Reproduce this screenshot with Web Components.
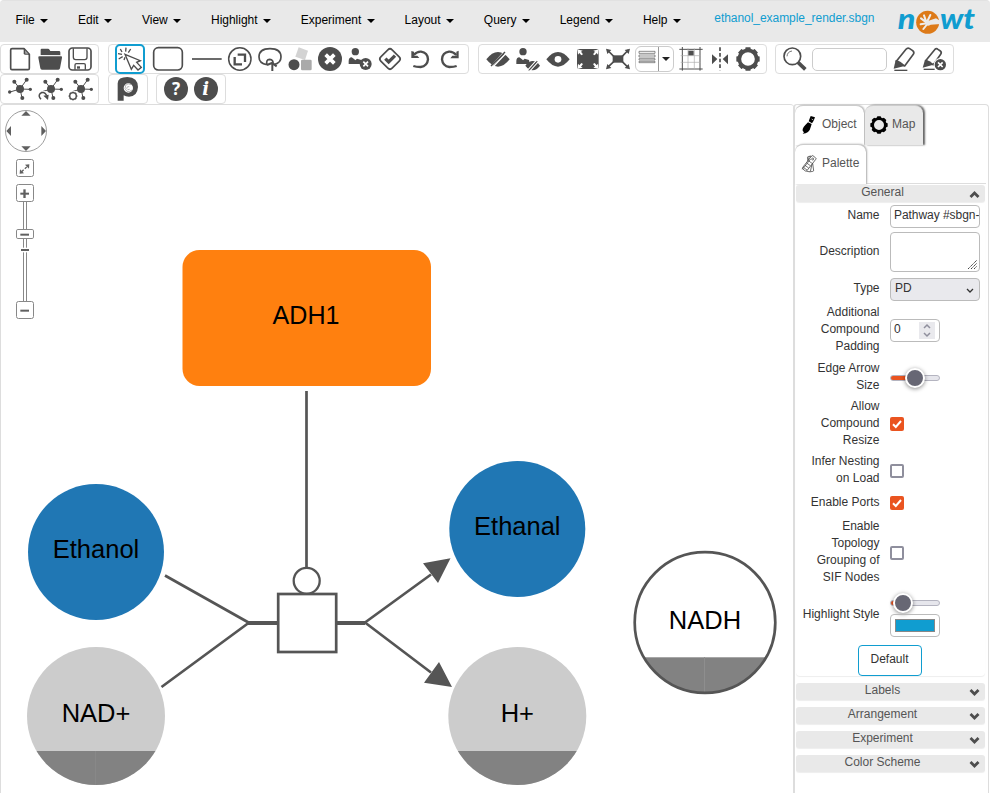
<!DOCTYPE html>
<html lang="en">
<head>
<meta charset="utf-8">
<title>Newt</title>
<style>
html,body{margin:0;height:100%;overflow:hidden;background:#fff}
body{font:12px/17px "Liberation Sans",Arial,sans-serif;color:#333}
</style>
</head>
<body>
<newt-app></newt-app>
<script>
const define = (name, html, init) => {
  const tpl = document.createElement('template');
  tpl.innerHTML = html;
  customElements.define(name, class extends HTMLElement {
    constructor() {
      super();
      this.attachShadow({ mode: 'open' }).append(tpl.content.cloneNode(true));
    }
    connectedCallback() { if (init) init.call(this, this.shadowRoot); }
  });
};

/* Each icon: [viewBox, markup]; three units per CSS pixel. */
const person = (x, y) => `<circle cx="${x}" cy="${y}" r="11"/><path d="M${x-20} ${y+37}v-9q0-10 9-11l8 6 3 3 5-5 13 4q2 4 1 12z"/>`;
const gearTeeth = (n, cx, cy, r, w, h) => Array.from({ length: n }, (_, i) =>
  `<rect x="${cx-w/2}" y="${cy-r-h}" width="${w}" height="${h+3}" rx="2" transform="rotate(${i*360/n} ${cx} ${cy})"/>`).join('');
const network = cx => `<g transform="translate(${cx} 267)"><circle r="12"/><g stroke="#4d4d4d" stroke-width="3"><path d="M0 0L-17-22M0 0L20-28M0 0L31 1M0 0L6 26M0 0L-30 9"/></g><circle cx="-17" cy="-22" r="6"/><circle cx="20" cy="-28" r="6"/><circle cx="31" cy="1" r="5"/><circle cx="7" cy="27" r="6"/>`;
const eye = '<path fill-rule="evenodd" d="M-35 0Q-18-22 0-22T35 0Q18 22 0 22T-35 0z"/>';
const ICONS = {
  file: ['15 132 90 90', '<path fill="none" stroke="#4d4d4d" stroke-width="5" stroke-linejoin="round" d="M36 146H72L88 163V205Q88 209 84 209H36Q32 209 32 205V150Q32 146 36 146z"/><path d="M71 145L89 164H75Q71 164 71 160z" fill="#4d4d4d"/><path d="M75 151l10 10H76z" fill="#aaa"/>'],
  folder: ['105 132 90 90', '<path d="M122 166V149q0-3 3-3h19q3 0 5 4l2 3h26q4 0 4 4v10z"/><path d="M120 167H182" stroke="#fff" stroke-width="3"/><path d="M115 173q-1-4 4-4h64q4 0 3 4l-6 32q-1 4-5 4h-49q-4 0-5-4z"/>'],
  save: ['195 132 90 90', '<g fill="none" stroke="#4d4d4d" stroke-width="5"><rect x="207" y="144" width="66" height="66" rx="10"/><path d="M220 145v27q0 7 7 7h27q7 0 7-7v-27" stroke-width="4"/><path d="M225 209v-14q0-4 4-4h23q4 0 4 4v14" stroke-width="4"/></g><rect x="231" y="199" width="9" height="7"/>'],
  pointer: ['345 132 90 90', '<g fill="none" stroke="#4d4d4d"><path d="M375 163L421 182L410 187L424 202L414 210L401 196L394 208Z" stroke-width="4"/><g stroke-width="4"><path d="M377 155L378 143M385 158L392 147M366 156L361 147M366 163L354 161M368 170L356 177M375 172L372 180"/></g></g>'],
  node: ['435 132 138 90', '<rect x="461" y="143" width="86" height="67" rx="14" fill="none" stroke="#4d4d4d" stroke-width="5"/>'],
  edge: ['574 132 102 90', '<path d="M577 177H666" stroke="#4d4d4d" stroke-width="5"/>'],
  expand: ['675 132 90 90', '<circle cx="719.500" cy="177" r="33.500" fill="none" stroke="#4d4d4d" stroke-width="4.500"/><path d="M713 164H735V186M704 171V193H726" fill="none" stroke="#4d4d4d" stroke-width="7"/>'],
  lasso: ['765 132 90 90', '<g fill="none" stroke="#4d4d4d" stroke-width="5"><path d="M801 194Q777 190 777 171Q777 146 810 146Q843 146 843 171Q843 189 822 194"/><path d="M801 194Q797 179 809 178Q821 179 819 192"/><path d="M801 195L816 189L830 199M817 192V213" stroke-width="6"/></g>'],
  shapes: ['855 132 90 90', '<path d="M896 142L924 152L915 180L886 170Z" fill="#d3d3d3"/><rect x="903" y="179" width="32" height="32" rx="4" fill="#aaa"/><circle cx="882" cy="194" r="16.500"/>'],
  remove: ['945 132 90 90', '<circle cx="990" cy="177" r="36"/><path d="M977 164L1003 190M1003 164L977 190" stroke="#fff" stroke-width="11"/>'],
  userx: ['45 132 90 90', person(76, 155) + '<circle cx="107" cy="192" r="18"/><path d="M100 185L114 199M114 185L100 199" stroke="#fff" stroke-width="5"/>'],
  check: ['135 132 90 90', '<rect x="156" y="153" width="48" height="48" rx="9" transform="rotate(45 180 177)" fill="none" stroke="#4d4d4d" stroke-width="5"/><path d="M166 176L176 186L195 167" fill="none" stroke="#4d4d4d" stroke-width="10"/>'],
  undo: ['225 132 90 90', '<path d="M251 165Q262 154 273 155Q293 158 294 178Q292 198 272 201Q258 201 250 198" fill="none" stroke="#4d4d4d" stroke-width="7"/><path d="M244 153v21h24l-6-7h-10v-12z"/>'],
  redo: ['315 132 90 90', '<path d="M379 165Q368 154 357 155Q337 158 336 178Q338 198 358 201Q372 201 380 198" fill="none" stroke="#4d4d4d" stroke-width="7"/><path d="M386 152v23h-25l6-8h12v-12z"/>'],
  hide: ['459 132 90 90', `<g transform="translate(504 178)">${eye}<path d="M-22 23L17-21M-16 24L24-18" stroke="#fff" stroke-width="4"/><path d="M-21 20L21-22" stroke="#4d4d4d" stroke-width="4"/></g>`],
  userhide: ['549 132 90 90', person(579, 155) + `<g transform="translate(608 197) scale(.63)">${eye}<path d="M-24 22L17-24M-14 26L26-18" stroke="#fff" stroke-width="6"/><path d="M-19 23L22-22" stroke="#4d4d4d" stroke-width="5"/></g>`],
  eye: ['639 132 90 90', `<g transform="translate(684 178)">${eye}<circle r="10" fill="#fff"/></g>`],
  fit: ['729 132 90 90', '<path d="M743 150h60v55h-60z"/><rect x="741" y="147" width="65" height="60" rx="5"/><g fill="#fff"><path d="M742 148l16 4-5 3 6 8-5 3-6-7-4 5zM806 148l-16 4 5 3-6 8 5 3 6-7 4 5zM742 207l16-4-5-3 6-8-5-3-6 7-4-5zM806 207l-16-4 5-3-6-8 5-3 6 7 4-5z"/></g>'],
  spread: ['819 132 90 90', '<rect x="848" y="166" width="32" height="22"/><path d="M832 150L852 170M895 150L876 170M832 203L852 184M895 203L876 184" stroke="#4d4d4d" stroke-width="5"/><path d="M828 146l16 4-12 12zM900 146l-16 4 12 12zM828 208l16-4-12-12zM900 208l-16-4 12-12z"/>'],
  align: ['915 138 72 78', '<g fill="none" stroke="#555" stroke-width="2"><path d="M927 154h48v6h-48zM927 165h48v6h-48zM927 176h48v4h-48zM927 184h48v4h-48z"/></g>'],
  grid: ['48 132 90 90', '<g fill="none" stroke="#4d4d4d"><path d="M58 148H128M58 207H128M67 141V212M120 141V212" stroke-width="3"/><path d="M62 167H123M62 187H123M84 145V210M103 145V210" stroke-width="2" stroke="#aaa"/></g><rect x="85" y="152" width="16" height="14"/>'],
  mirror: ['138 132 84 90', '<path d="M156 163V193L172 177zM204 163V193L188 177z"/><path d="M180 142V211" stroke="#4d4d4d" stroke-width="5" stroke-dasharray="11 6"/>'],
  gear: ['219 132 90 90', '<circle cx="264" cy="177" r="26" fill="none" stroke="#4d4d4d" stroke-width="11"/>' + gearTeeth(8, 264, 177, 29, 16, 6)],
  search: ['360 132 90 90', '<circle cx="397" cy="169" r="25" fill="none" stroke="#4d4d4d" stroke-width="5"/><path d="M381 169q1-14 15-16" fill="none" stroke="#777" stroke-width="3"/><path d="M414 187L436 208" stroke="#4d4d4d" stroke-width="11"/>'],
  pencil: ['687 132 90 90', '<path d="M709 184L738 148Q743 142 749 146L758 152Q764 157 760 163L734 198Z" fill="none" stroke="#4d4d4d" stroke-width="5" stroke-linejoin="round"/><path d="M707 180Q724 183 734 198L701 206z"/><path d="M703 211H742" stroke="#4d4d4d" stroke-width="4"/>'],
  pencilx: ['777 132 90 90', '<path d="M797 182L824 149Q829 144 834 148L841 153Q846 157 842 163L820 194Z" fill="none" stroke="#4d4d4d" stroke-width="5" stroke-linejoin="round"/><path d="M795 179Q810 181 820 194L788 203z"/><path d="M791 208H824" stroke="#4d4d4d" stroke-width="4"/><circle cx="841" cy="194" r="20" fill="#fff"/><circle cx="841" cy="194" r="17"/><path d="M834 187L848 201M848 187L834 201" stroke="#fff" stroke-width="5"/>'],
  net: ['15 222 90 90', network(60) + '<circle cx="-31" cy="9" r="5"/></g>'],
  netredo: ['105 222 90 90', network(153) + '</g><circle cx="130" cy="288" r="15" fill="#fff"/><path d="M123 298Q114 288 120 281Q131 272 140 286" fill="none" stroke="#4d4d4d" stroke-width="4.500"/><path d="M130 287l16-3-2 16z"/>'],
  netgear: ['195 222 90 90', network(243) + '</g><circle cx="219" cy="288" r="16" fill="#fff"/><circle cx="219" cy="288" r="10" fill="none" stroke="#4d4d4d" stroke-width="4"/>' + gearTeeth(8, 219, 288, 11, 5, 2.5)],
  pathway: ['339 222 90 90', '<path fill-rule="evenodd" d="M353 302V250Q354 231 382 231Q414 233 414 261Q412 290 387 290Q377 290 371 286V302zM371 264A14 14 0 1 0 399 264A14 14 0 1 0 371 264z"/><path d="M393 254Q384 248 377 256Q371 267 381 274Q389 277 396 270M388 260q-7-2-8 5 3 6 9 3" fill="none" stroke="#aaa" stroke-width="2.500"/>'],
  help: ['483 222 90 90', '<circle cx="528" cy="267" r="36"/><text x="528" y="285" text-anchor="middle" font-size="51" font-weight="700" fill="#fff" font-family="Noto Sans,sans-serif">?</text>'],
  info: ['573 222 90 90', '<circle cx="618" cy="267" r="36"/><text x="617" y="286" text-anchor="middle" font-size="54" font-style="italic" font-weight="700" fill="#fff" font-family="DejaVu Serif,serif">i</text>'],
  brush: ['33 42 60 66', '<g fill="#000"><path d="M65 48L78 52L74 62L69 70L59 64z"/><path d="M68 57l5 3" stroke="#fff" stroke-width="2"/><path d="M57 67l11 5-3 10q-4 19-24 19l4-4q-8-5-1-16 6-7 13-14z"/></g>'],
  tabgear: ['240 42 60 66', '<g fill="#000"><circle cx="270" cy="75" r="19" fill="none" stroke="#000" stroke-width="8"/>' + gearTeeth(8, 270, 75, 21, 12, 5) + '</g>'],
  swatch: ['33 158 60 66', '<g fill="#fff" stroke="#333" stroke-width="2"><rect x="58" y="168" width="13" height="46" rx="3" transform="rotate(-8 64 190)"/><rect x="56" y="168" width="13" height="46" rx="3" transform="rotate(12 62 190)"/><rect x="52" y="164" width="16" height="50" rx="3" transform="rotate(38 60 190)"/><path d="M43 201l11 8M48 195l11 8M53 188l11 8M58 181l11 8M40 207l25-31"/></g><circle cx="71" cy="176" r="3" fill="none" stroke="#333" stroke-width="2"/>']
};

define('newt-icon', `<style>:host{display:block;flex:none}svg{display:block;fill:#4d4d4d}</style><svg></svg>`, function (r) {
  const [box, body] = ICONS[this.getAttribute('name')], s = r.querySelector('svg'), b = box.split(' ');
  s.setAttribute('viewBox', box);
  s.setAttribute('width', b[2] / 3);
  s.setAttribute('height', b[3] / 3);
  s.innerHTML = body;
});

define('newt-menu', `<style>:host{display:flex;align-items:center;padding:0 15px;color:#000}
i{width:0;height:0;border:4px solid transparent;border-top-color:#000;border-bottom:0;margin-left:5.3px;margin-top:1px}</style><slot></slot><i></i>`);

define('newt-logo', `<style>:host{display:block}svg{display:block}</style>
<svg width="90" height="37" viewBox="708 3 270 111"><g fill="#109dd0" font-family="Lato,sans-serif" font-weight="900" font-style="italic" font-size="84"><text x="713" y="87" textLength="53" lengthAdjust="spacingAndGlyphs">n</text><text x="840" y="87" textLength="105" lengthAdjust="spacingAndGlyphs">wt</text></g>
<circle cx="803" cy="67" r="34.500" fill="#dd7a18"/><path d="M800 68L783 55M799 66L792 46M801 66L811 45M800 70L782 73M802 72L790 87" stroke="#eee" stroke-width="6" stroke-linecap="round"/><path d="M795 69Q796 60 806 62L828 55 842 64V72L812 74Q800 82 795 69z" fill="#e9e9e9"/></svg>`);

define('newt-menubar', `<style>:host{display:flex;height:42px;box-sizing:border-box;background:#e9e9e9;border-radius:4px 4px 0 0;border-top:1px solid #e2e2e2;padding-left:.5px;flex:none}
nav{display:flex;height:38px;flex:none;letter-spacing:-.02px}.name{color:#109dd0;margin:9px 0 0 18.500px;width:182px;white-space:nowrap;letter-spacing:-.05px}</style>
<nav><newt-menu>File</newt-menu><newt-menu>Edit</newt-menu><newt-menu>View</newt-menu><newt-menu>Highlight</newt-menu><newt-menu>Experiment</newt-menu><newt-menu>Layout</newt-menu><newt-menu>Query</newt-menu><newt-menu>Legend</newt-menu><newt-menu>Help</newt-menu></nav><span class="name">ethanol_example_render.sbgn</span><newt-logo></newt-logo>`);

define('newt-group', `<style>:host{display:flex;height:30px;box-sizing:border-box;border:1px solid #ddd;border-radius:4px;align-items:center;flex:none}</style><slot></slot>`);

define('newt-toolbar', `<style>:host{display:block;flex:none;padding-top:2px}
.row{display:flex;gap:9px;height:30px}
.a{width:99px;padding-left:4px}.b{width:361px;padding-left:6px}.c{width:289px;padding-left:4px}.d{width:179px;padding-left:4px}
.p{width:40px;padding-left:4px}.h{width:70px;padding-left:4px}
.on{outline:2px solid #109dd0;outline-offset:-2px;border-radius:5px}
.drop{display:flex;box-sizing:border-box;border:1px solid #ccc;border-radius:6px;width:39px;height:26px;margin:0 2px;overflow:hidden;align-items:center}
.drop newt-icon{margin-left:-1px;width:23px;overflow:hidden}
.drop b{flex:1;height:100%;border-left:1px solid #999;display:grid;place-items:center}
.drop i{border:4px solid transparent;border-top-color:#222;border-bottom:0}
.find{width:75px;height:23px;box-sizing:border-box;border:1px solid #ccc;border-radius:5px;margin:0 2px}
</style>
<div class="row"><newt-group class="a"><newt-icon name="file"></newt-icon><newt-icon name="folder"></newt-icon><newt-icon name="save"></newt-icon></newt-group>
<newt-group class="b"><newt-icon class="on" name="pointer"></newt-icon><newt-icon name="node"></newt-icon><newt-icon name="edge"></newt-icon><newt-icon name="expand"></newt-icon><newt-icon name="lasso"></newt-icon><newt-icon name="shapes"></newt-icon><newt-icon name="remove"></newt-icon><newt-icon name="userx"></newt-icon><newt-icon name="check"></newt-icon><newt-icon name="undo"></newt-icon><newt-icon name="redo"></newt-icon></newt-group>
<newt-group class="c"><newt-icon name="hide"></newt-icon><newt-icon name="userhide"></newt-icon><newt-icon name="eye"></newt-icon><newt-icon name="fit"></newt-icon><newt-icon name="spread"></newt-icon><span class="drop"><newt-icon name="align"></newt-icon><b><i></i></b></span><newt-icon name="grid"></newt-icon><newt-icon name="mirror"></newt-icon><newt-icon name="gear" style="margin-left:-1px"></newt-icon></newt-group>
<newt-group class="d" style="margin-left:-1px"><newt-icon name="search"></newt-icon><span class="find"></span><newt-icon name="pencil"></newt-icon><newt-icon name="pencilx"></newt-icon></newt-group></div>
<div class="row"><newt-group class="a"><newt-icon name="net"></newt-icon><newt-icon name="netredo"></newt-icon><newt-icon name="netgear"></newt-icon></newt-group><newt-group class="p"><newt-icon name="pathway"></newt-icon></newt-group><newt-group class="h" style="margin-left:-1px"><newt-icon name="help"></newt-icon><newt-icon name="info"></newt-icon></newt-group></div>`);

define('newt-panzoom', `<style>:host{display:block}svg{display:block}</style>
<svg width="50" height="220" viewBox="0 12 150 660"><g fill="#fff" stroke="#888" stroke-width="3"><circle cx="78" cy="93" r="61.500" stroke-width="2.500"/><rect x="49.500" y="178.500" width="51" height="51" rx="6"/><path d="M70.500 300V606M79.500 300V606"/><rect x="49.500" y="253.500" width="51" height="51" rx="6"/><rect x="49.500" y="388.500" width="51" height="27" rx="4"/><rect x="49.500" y="604.500" width="51" height="51" rx="6"/></g>
<rect x="63" y="443" width="24" height="14" fill="#fff"/>
<g fill="#606060"><path d="M78 33l14 14H64zM78 153l14-14H64zM19 93l14-15v30zM138 93l-14-15v30zM88 193l-1 13-12-12zM59 221l1-13 12 12z"/><path d="M65 215L82 199" stroke="#606060" stroke-width="4" stroke-dasharray="8 5"/><rect x="61" y="278" width="26" height="6"/><rect x="70" y="268" width="7" height="26"/><rect x="61" y="401" width="26" height="6"/><rect x="63" y="447" width="24" height="6"/><rect x="61" y="629" width="26" height="6"/></g></svg>`);

define('newt-canvas', `<style>:host{display:block;position:relative;box-sizing:border-box;width:794px;flex:none;border:1px solid #ddd;border-width:1px 0 0 1px;border-radius:4px 4px 0 0;overflow:hidden}
.map{display:block}newt-panzoom{position:absolute;left:-1px;top:-1px}text{font:25.5px "Liberation Sans",Arial,sans-serif;fill:#000;text-anchor:middle}</style>
<svg class="map" width="793" height="688" viewBox="1 105 793 688">
<defs><clipPath id="n"><circle cx="96" cy="716" r="69"/></clipPath><clipPath id="h"><circle cx="517.300" cy="716" r="69"/></clipPath><clipPath id="d"><circle cx="705" cy="622.500" r="70"/></clipPath></defs>
<rect x="182.500" y="250" width="248.500" height="136" rx="17" fill="#ff800f"/>
<circle cx="96" cy="552" r="68" fill="#2077b4"/><circle cx="517.300" cy="529" r="68" fill="#2077b4"/>
<circle cx="96" cy="716" r="69" fill="#ccc"/><circle cx="517.300" cy="716" r="69" fill="#ccc"/>
<rect x="20" y="751" width="160" height="40" fill="#828282" clip-path="url(#n)"/><path d="M95.500 751V785" stroke="#888"/>
<rect x="440" y="751" width="160" height="40" fill="#828282" clip-path="url(#h)"/>
<rect x="630" y="657.300" width="150" height="40" fill="#828282" clip-path="url(#d)"/><path d="M704.500 657V692" stroke="#8e8e8e"/>
<g fill="none" stroke="#555" stroke-width="2.700"><circle cx="705" cy="622.500" r="70.300"/><path d="M306.500 391V568M165 575.500L248.500 622.500M161.500 687L248.500 623M365 622.500L431 574.500M365 622.500L431 672.500"/><circle cx="306.700" cy="580.800" r="13" stroke-width="2.300"/><rect x="278.200" y="594" width="58" height="58" fill="#fff"/><path d="M248 623H277M337 623H365" stroke-width="3.800"/></g>
<path fill="#555" d="M423 563.300L450.500 558.300L438 583zM439 662L452 687L424 682.700z"/>
<text x="306" y="324" textLength="67" lengthAdjust="spacingAndGlyphs">ADH1</text><text x="96" y="558">Ethanol</text><text x="517.300" y="534.700">Ethanal</text><text x="96" y="722">NAD+</text><text x="517.300" y="722">H+</text><text x="705" y="629">NADH</text>
</svg><newt-panzoom></newt-panzoom>`);

define('newt-tab', `<style>:host{display:flex;box-sizing:border-box;height:40px;align-items:center;border-radius:8px 8px 0 0;color:#555;border-top:1px solid #ccc;box-shadow:1px 0 2px #aaa;background:#fff;gap:2px;padding-left:5px}
:host([active]){background:#e9e9e9;box-shadow:2px 0 2px #666}span{margin-top:-2px}slot[name]{display:block;margin-top:-1px}</style><slot name="icon"></slot><span><slot></slot></span>`);

define('newt-section', `<style>:host{display:block;margin:0 2px 7px 1px}
header{display:flex;height:17px;background:#e9e9e9;border-radius:3px;color:#555;justify-content:center;align-items:center;position:relative;box-shadow:0 1px 1px #eee}
header span{line-height:14px;padding:0 16px 3px 0}svg{position:absolute;right:5px;top:5px}
:host([open]) svg{transform:scaleY(-1)}</style>
<header><span></span><svg width="11" height="9" viewBox="0 0 11 9"><path d="M1.500 2L5.500 6L9.500 2" fill="none" stroke="#4d4d4d" stroke-width="2.800"/></svg></header><slot></slot>`, function (r) {
  r.querySelector('span').textContent = this.getAttribute('label');
});

define('newt-field', `<style>:host{display:grid;grid-template-columns:83.500px 90px;grid-template-rows:100%;column-gap:10.500px;align-items:center}
label{text-align:right;color:#333;padding-bottom:2px;white-space:pre-line}</style><label></label><slot></slot>`, function (r) {
  r.querySelector('label').textContent = this.getAttribute('label').replaceAll('|', '\n');
  this.style.height = this.getAttribute('h') + 'px';
});

define('newt-check', `<style>:host{display:block;width:14px;height:14px;box-sizing:border-box;border:2px solid #8f8f9d;border-radius:2px}svg{display:none}
:host([checked]){border:0;background:#ea5420}:host([checked]) svg{display:block}</style><svg width="14" height="14"><path d="M3 7.200L5.800 10L11 4" fill="none" stroke="#fff" stroke-width="2"/></svg>`);

define('newt-slider', `<style>:host{display:flex;align-items:center;width:50px;height:20px}
div{display:flex;align-items:center;box-sizing:border-box;width:50px;height:6px;border-radius:3px;border:1px solid #b4b4c0;background:linear-gradient(to right,#ea5420 var(--v),#e6e6ec 0)}
i{box-sizing:border-box;width:20px;height:20px;flex:none;border:2px solid #fff;border-radius:50%;background:#676774;margin-left:calc(var(--v) - 11px);box-shadow:0 1px 4px #0007}</style><div><i></i></div>`, function () {
  this.style.setProperty('--v', this.getAttribute('at') + 'px');
});

define('newt-panel', `<style>:host{display:block;box-sizing:border-box;width:196px;margin-left:-1px;flex:none;border:1px solid #ddd;border-left-width:2px;border-right-width:1px;border-bottom:0;border-radius:4px 4px 0 0}
.tabs{display:grid;grid-template-columns:69px 58px;column-gap:1px;grid-template-rows:38.500px 40px;height:78px;border-bottom:1px solid #ddd;margin-right:2px}
.map{padding-left:4px;gap:3px}.pal{width:71px}
newt-section{margin-right:3px}
.body{padding-top:1px;height:473px;border-radius:4px;box-shadow:0 1px 1px #eee}
.in{box-sizing:border-box;height:23px;border:1px solid #bbb;border-radius:4px;padding:1px 0 0 4px;line-height:17px;overflow:hidden;white-space:nowrap;width:90px;position:relative}
.name{padding-left:3px;letter-spacing:-.05px}
.area{height:40px}.area svg{position:absolute;right:1px;bottom:1px}
.sel{background:#e9e9ed}.sel svg{position:absolute;right:5px;top:8px}
.num{width:50px;padding-left:3px}.num svg{position:absolute;right:4px;top:2px;background:#e9e9ed}
.hl{display:flex;flex-direction:column;align-self:end}
.color{padding:4px;width:50px;margin-top:1px}.color b{display:block;height:13px;box-sizing:border-box;background:#109dd0;border:1px solid #888}
button{display:block;margin:8px 0 0 61.500px;width:64px;height:31px;box-sizing:border-box;border:1px solid #109dd0;border-radius:4px;background:#fff;font:inherit;color:#333;padding:0 0 3px}
.first{margin-top:1px}
</style>
<div class="tabs"><newt-tab><newt-icon slot="icon" name="brush"></newt-icon>Object</newt-tab><newt-tab class="map" active><newt-icon slot="icon" name="tabgear"></newt-icon>Map</newt-tab><newt-tab class="pal"><newt-icon slot="icon" name="swatch"></newt-icon>Palette</newt-tab></div>
<newt-section class="first" label="General" open><div class="body">
<newt-field label="Name" h="27"><div class="in name">Pathway #sbgn-</div></newt-field>
<newt-field label="Description" h="44"><div class="in area"><svg width="11" height="11"><path d="M1 10L10 1M4 10L10 4M7 10L10 7" stroke="#444" stroke-dasharray="1.500 .5"/></svg></div></newt-field>
<newt-field label="Type" h="31"><div class="in sel">PD<svg width="8" height="7"><path d="M1 2L4 5L7 2" fill="none" stroke="#333" stroke-width="1.300"/></svg></div></newt-field>
<newt-field label="Additional|Compound|Padding" h="51"><div class="in num">0<svg width="16" height="17"><path d="M5 6L8 3L11 6M5 11L8 14L11 11" fill="none" stroke="#8f8f9d" stroke-width="1.500"/></svg></div></newt-field>
<newt-field label="Edge Arrow|Size" h="43"><newt-slider at="25"></newt-slider></newt-field>
<newt-field label="Allow|Compound|Resize" h="50"><newt-check checked></newt-check></newt-field>
<newt-field label="Infer Nesting|on Load" h="44"><newt-check></newt-check></newt-field>
<newt-field label="Enable Ports" h="20"><newt-check checked></newt-check></newt-field>
<newt-field label="Enable|Topology|Grouping of|SIF Nodes" h="80"><newt-check></newt-check></newt-field>
<newt-field label="Highlight Style" h="44"><div class="hl"><newt-slider at="13"></newt-slider><div class="in color"><b></b></div></div></newt-field>
<button>Default</button>
</div></newt-section>
<newt-section label="Labels"></newt-section><newt-section label="Arrangement"></newt-section><newt-section label="Experiment"></newt-section><newt-section label="Color Scheme"></newt-section>`);

define('newt-app', `<style>:host{display:flex;flex-direction:column;width:990px;height:793px;overflow:hidden}main{display:flex;flex:1;min-height:0}</style>
<newt-menubar></newt-menubar><newt-toolbar></newt-toolbar><main><newt-canvas></newt-canvas><newt-panel></newt-panel></main>`);
</script>
</body>
</html>
